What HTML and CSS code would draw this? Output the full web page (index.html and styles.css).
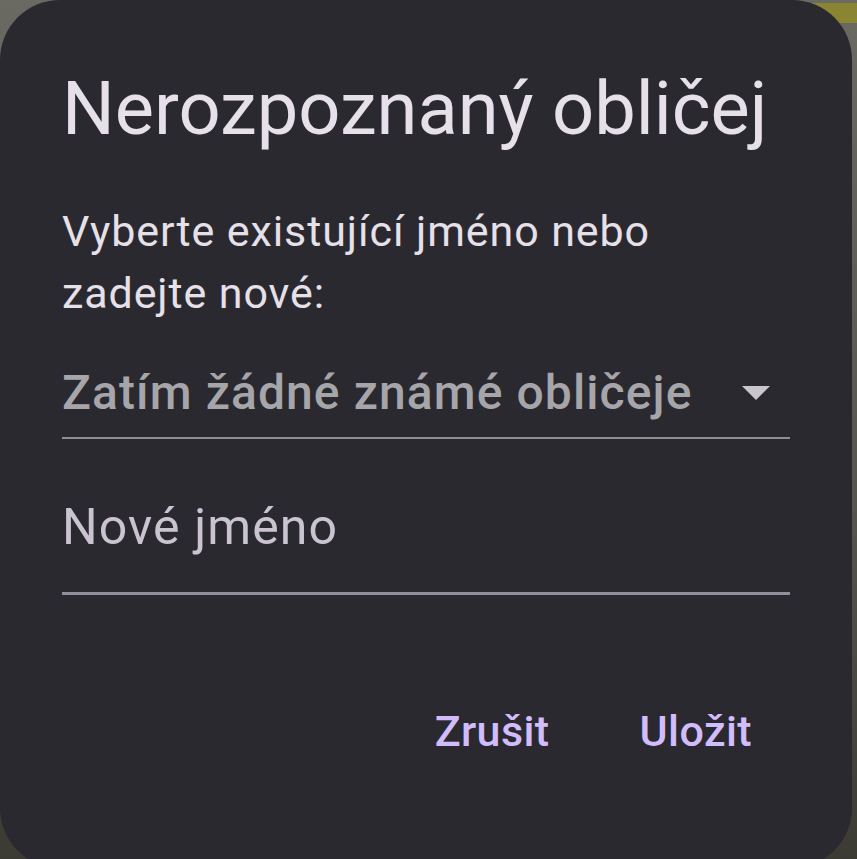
FILE: index.html
```html
<!DOCTYPE html>
<html lang="cs">
<head>
<meta charset="utf-8">
<link rel="stylesheet" href="styles.css">
</head>
<body>
<div class="backdrop"><div class="strip"></div></div>
<div class="dialog">
  <h1 class="title">Nerozpoznaný obličej</h1>
  <p class="message">Vyberte existující jméno nebo zadejte nové:</p>
  <div class="select">
    <span class="select-text">Zatím žádné známé obličeje</span>
    <svg class="arrow" width="28" height="14" viewBox="0 0 28 14"><path d="M0 0 L28 0 L14 14 Z" fill="#c9c7cc"/></svg>
  </div>
  <div class="field">
    <span class="placeholder">Nové jméno</span>
  </div>
  <div class="actions">
    <span class="btn">Zrušit</span>
    <span class="btn">Uložit</span>
  </div>
</div>
</body>
</html>
```
FILE: styles.css
```css
html, body {
  margin: 0;
  padding: 0;
  width: 857px;
  height: 859px;
  overflow: hidden;
  background: #64645c;
  font-family: Roboto, "Noto Sans", sans-serif;
}
.backdrop {
  position: absolute;
  inset: 0;
  background: linear-gradient(180deg, #6a6a62 0%, #55554d 60%, #3c3b33 100%);
}
.strip {
  position: absolute;
  top: 3px;
  left: 780px;
  width: 77px;
  height: 20px;
  background: #8a8532;
}
.dialog {
  position: absolute;
  left: 0;
  top: 0;
  width: 852px;
  height: 868px;
  box-sizing: border-box;
  background: #2b2930;
  border-radius: 60px;
  padding: 64px 62px 0 62px;
  display: flex;
  flex-direction: column;
}
.title {
  margin: 0;
  font-weight: 400;
  font-size: 74px;
  line-height: 90px;
  color: #e6e0e9;
  white-space: nowrap;
}
.message {
  margin: 46px 0 0 0;
  font-size: 43px;
  line-height: 62px;
  color: #e6e0e9;
  letter-spacing: 0.9px;
  max-width: 710px;
}
.select {
  margin-top: 39px;
  display: flex;
  align-items: center;
  justify-content: space-between;
  padding-bottom: 14px;
  border-bottom: 2px solid #8f8d93;
}
.select-text {
  font-size: 48px;
  line-height: 60px;
  color: #a6a5aa;
  letter-spacing: 1.1px;
  font-weight: 500;
  white-space: nowrap;
}
.arrow {
  margin-right: 20px;
  display: block;
}
.field {
  margin-top: 58px;
  padding-bottom: 35px;
  border-bottom: 3px solid #938f99;
}
.placeholder {
  display: block;
  font-size: 50px;
  line-height: 60px;
  color: #c9c4cf;
  letter-spacing: 1.1px;
}
.actions {
  margin-top: 111px;
  display: flex;
  justify-content: flex-end;
  gap: 90px;
  padding-right: 38px;
}
.btn {
  font-size: 43px;
  line-height: 50px;
  font-weight: 500;
  color: #d0bcff;
  letter-spacing: 0.4px;
}
```
